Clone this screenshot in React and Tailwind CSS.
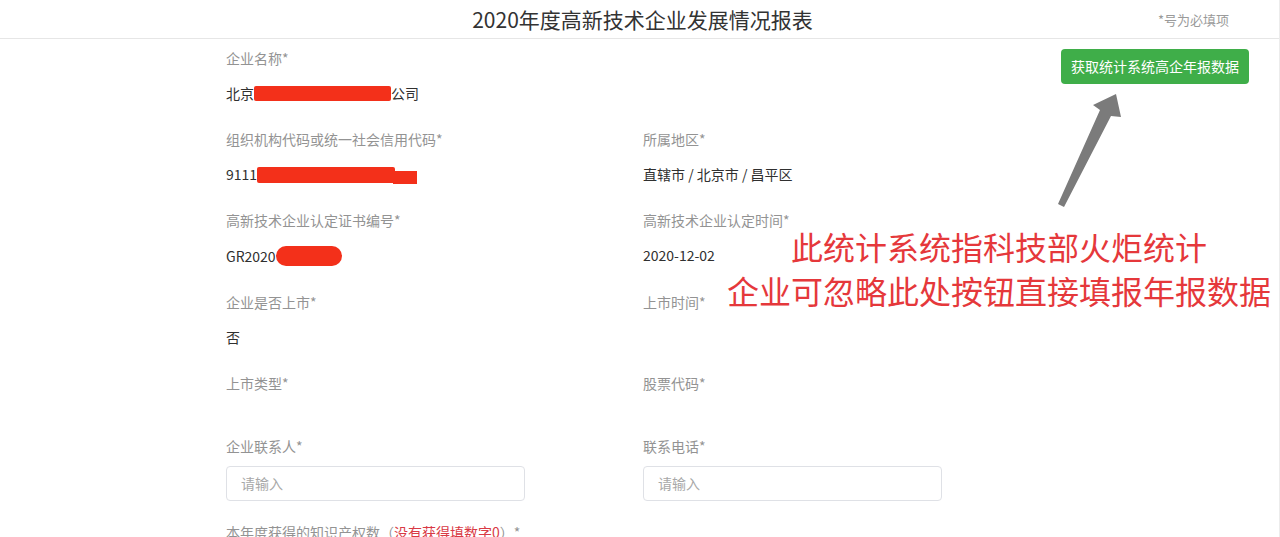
import React from "react";

const FONT = { fontFamily: '"Noto Sans CJK SC", "Noto Sans", sans-serif' };

function Label({ children }) {
  return <div className="h-[20px] leading-[20px] text-[14px] text-[#939393] whitespace-nowrap">{children}</div>;
}

function Value({ children }) {
  return <div className="mt-[15px] leading-[20px] text-[14px] text-[#303030] whitespace-nowrap flex items-center">{children}</div>;
}

function Field({ label, children }) {
  return (
    <div className="pb-[26px]">
      <Label>{label}</Label>
      <Value>{children}</Value>
    </div>
  );
}

function InputBox() {
  return (
    <div className="mt-[10px] w-[299px] h-[35px] border border-[#dfe1e6] rounded-[4px] flex items-center pl-[14px] text-[14px] text-[#a8a8a8]">
      请输入
    </div>
  );
}

export default function App() {
  return (
    <div className="relative w-[1280px] h-[537px] overflow-hidden bg-white border-r border-[#ececec]" style={FONT}>
      {/* header */}
      <div className="h-[39px] border-b border-[#e6e6e6] grid grid-cols-[1fr_auto_1fr] items-center">
        <div />
        <div className="text-[21px] leading-[38px] text-[#333] ml-[6px]">2020年度高新技术企业发展情况报表</div>
        <div className="flex justify-end pr-[50px] text-[13px] text-[#9a9a9a] pt-[2px]">*号为必填项</div>
      </div>

      {/* body */}
      <div className="flex pl-[226px] pt-[9px]">
        <div className="flex-1 grid grid-cols-[417px_417px]">
          <Field label="企业名称*">
            北京<span className="inline-block w-[137px] h-[15px] bg-[#f3301a] rounded-[2px] mt-[1px]" />公司
          </Field>
          <div />

          <Field label="组织机构代码或统一社会信用代码*">
            9111
            <span className="relative inline-block w-[160px] h-[16px] mt-[2px]">
              <span className="absolute left-0 top-0 w-[138px] h-[16px] bg-[#f3301a] rounded-[2px]" />
              <span className="absolute left-[136px] top-[4px] w-[24px] h-[13px] bg-[#f3301a]" />
            </span>
          </Field>
          <Field label="所属地区*">直辖市 / 北京市 / 昌平区</Field>

          <Field label="高新技术企业认定证书编号*">
            GR2020
            <span className="inline-block w-[66px] h-[20px] bg-[#f3301a] rounded-[10px] mt-[1px]" />
          </Field>
          <Field label="高新技术企业认定时间*">2020-12-02</Field>

          <Field label="企业是否上市*">否</Field>
          <Field label="上市时间*"></Field>

          <div className="pb-[28px]">
            <Label>上市类型*</Label>
            <Value></Value>
          </div>
          <div className="pb-[28px]">
            <Label>股票代码*</Label>
            <Value></Value>
          </div>

          <div className="pb-[21px]">
            <Label>企业联系人*</Label>
            <InputBox />
          </div>
          <div className="pb-[21px]">
            <Label>联系电话*</Label>
            <InputBox />
          </div>

          <div className="col-span-2">
            <Label>
              本年度获得的知识产权数（<span className="text-[#d93a45]">没有获得填数字0</span>）*
            </Label>
          </div>
        </div>

        <div className="pr-[30px] pt-[1px]">
          <button className="w-[188px] h-[35px] rounded-[4px] bg-[#3fae49] text-white text-[14px] leading-[35px] whitespace-nowrap">
            获取统计系统高企年报数据
          </button>
        </div>
      </div>

      {/* annotation arrow */}
      <svg className="absolute left-0 top-0 pointer-events-none" width="1280" height="537">
        <polygon
          points="1116,94 1121,117 1111,116 1064,207 1058,204 1100,110 1093,105"
          fill="#7b7b7b"
        />
      </svg>

      {/* annotation text */}
      <div className="absolute left-[709px] top-[224px] w-[580px] text-center text-[32px] leading-[44px] text-[#e5383b] whitespace-nowrap">
        <div>此统计系统指科技部火炬统计</div>
        <div>企业可忽略此处按钮直接填报年报数据</div>
      </div>
    </div>
  );
}
